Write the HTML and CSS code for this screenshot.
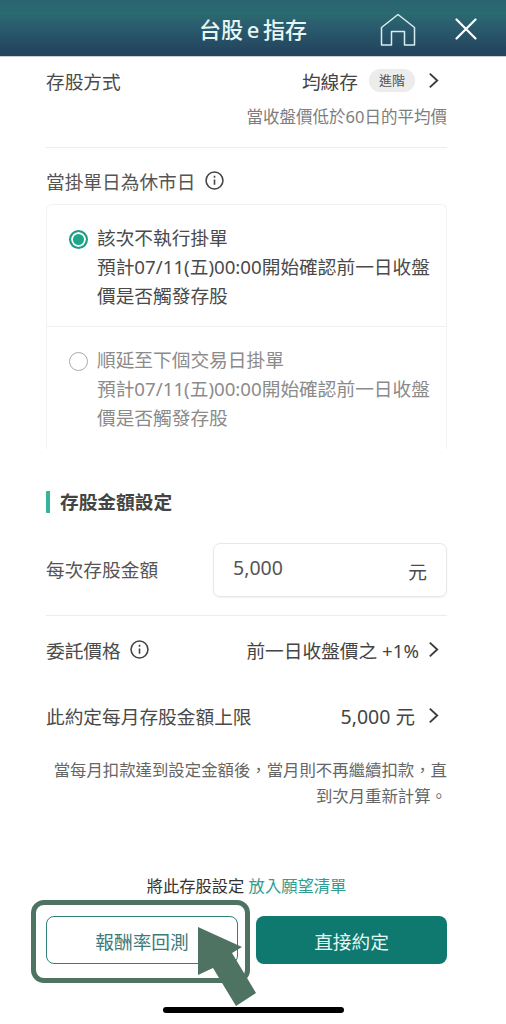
FILE: index.html
```html
<!DOCTYPE html>
<html lang="zh-Hant">
<head>
<meta charset="utf-8">
<title>台股e指存</title>
<link rel="stylesheet" href="styles.css">
</head>
<body>
<div class="page">
  <header class="topbar">
    <h1 class="title">台股 e 指存</h1>
    <svg class="home" viewBox="0 0 36 34" width="36" height="34"><path d="M1.500 32V14.500L18 1.500l16.500 13V32H24.500V18.500h-13V32z" fill="none" stroke="#d5efee" stroke-width="1.500" stroke-linejoin="round"/></svg>
    <svg class="close" viewBox="0 0 22 22" width="22" height="22"><path d="M1.500 1.500l19 19M20.500 1.500l-19 19" stroke="#fff" stroke-width="2.200" stroke-linecap="round"/></svg>
  </header>
  <main class="content">
    <div class="row method">
      <span>存股方式</span>
      <span class="value">均線存<span class="tag">進階</span><svg class="chev" viewBox="0 0 10 16"><path d="M1.500 1.500L8.500 8l-7 6.500"/></svg></span>
    </div>
    <p class="hint">當收盤價低於60日的平均價</p>
    <hr class="rule rule-a">
    <div class="label-line">當掛單日為休市日<svg class="info" viewBox="0 0 18 18"><circle cx="9" cy="9" r="8"/><path d="M9 8v5M9 4.600v1.800"/></svg></div>
    <div class="card">
      <div class="option">
        <span class="radio on"></span>
        <div class="option-text">該次不執行掛單<br>預計07/11(五)00:00開始確認前一日收盤<br>價是否觸發存股</div>
      </div>
      <div class="option off">
        <span class="radio"></span>
        <div class="option-text">順延至下個交易日掛單<br>預計07/11(五)00:00開始確認前一日收盤<br>價是否觸發存股</div>
      </div>
    </div>
    <h2 class="section">存股金額設定</h2>
    <div class="row amount">
      <span class="amount-label">每次存股金額</span>
      <div class="input"><span class="num">5,000</span><span>元</span></div>
    </div>
    <hr class="rule rule-b">
    <div class="row price">
      <span class="with-icon">委託價格<svg class="info" viewBox="0 0 18 18"><circle cx="9" cy="9" r="8"/><path d="M9 8v5M9 4.600v1.800"/></svg></span>
      <span class="value">前一日收盤價之 +1%<svg class="chev" viewBox="0 0 10 16"><path d="M1.500 1.500L8.500 8l-7 6.500"/></svg></span>
    </div>
    <div class="row limit">
      <span>此約定每月存股金額上限</span>
      <span class="value limit-value">5,000 元<svg class="chev" viewBox="0 0 10 16"><path d="M1.500 1.500L8.500 8l-7 6.500"/></svg></span>
    </div>
    <p class="note">當每月扣款達到設定金額後，當月則不再繼續扣款，直到次月重新計算。</p>
    <p class="wish">將此存股設定 <a class="link">放入願望清單</a></p>
    <div class="actions">
      <button class="btn ghost">報酬率回測</button>
      <button class="btn solid">直接約定</button>
    </div>
  </main>
  <div class="callout"></div>
  <svg class="arrow" viewBox="0 0 60 82" width="60" height="82"><path d="M0 1L44 21 34 27 58 67 38 80 15 42 0 49z" fill="#4e7362"/></svg>
  <div class="indicator"></div>
</div>
</body>
</html>
```
FILE: styles.css
```css
* { box-sizing: border-box; }
html, body { margin: 0; padding: 0; background: #fff; }
body { font-family: "Noto Sans", "Noto Sans CJK TC", sans-serif; color: #4a4a4a; }
.page { position: relative; width: 506px; height: 1024px; overflow: hidden; background: #fff; }

.topbar { position: relative; height: 57px; background: linear-gradient(#2b6473 0, #2a6a70 14px, #2a5c6e 26px, #24465f 50px, #24445d 56px); border-bottom: 1px solid #c9d0d4; }
.title { margin: 0; position: absolute; left: 199px; top: 14px; font-size: 22px; line-height: 30px; font-weight: 500; color: #e6f6f4; white-space: nowrap; word-spacing: -2px; }
.home { position: absolute; left: 380px; top: 13px; }
.close { position: absolute; left: 455px; top: 18px; }

.content { padding: 0 59px 0 46px; }
.row { display: flex; justify-content: space-between; align-items: center; font-size: 18.700px; white-space: nowrap; }
.value { display: flex; align-items: center; color: #444; }
.chev { width: 11px; height: 17px; margin-left: 9px; fill: none; stroke: #3c3c3c; stroke-width: 1.800; }
.method { height: 29px; margin: 9px 8px 0 0; }
.tag { margin: 0 13px 0 11px; width: 46px; text-align: center; height: 23px; line-height: 23px; font-size: 13px; border-radius: 12px; background: #ececec; color: #555; }
.method .chev { margin-left: 0; }
.hint { margin: 11px 0 0; font-size: 16.500px; line-height: 22px; text-align: right; color: #7d7d7d; white-space: nowrap; }
.rule { margin: 0; border: 0; height: 1px; background: #ececec; }
.rule-a { margin-top: 19px; }
.label-line { display: flex; align-items: center; margin-top: 19px; height: 26px; font-size: 18.700px; color: #555; }
.info { width: 19px; height: 19px; margin-left: 9px; fill: none; stroke: #444; stroke-width: 1.500; }
.card { margin: 11px 0 0; height: 245px; border: 1px solid #f2f2f2; border-bottom: 0; border-radius: 6px 6px 0 0; }
.option { display: flex; height: 121px; padding: 18px 0 0 22px; }
.option + .option { border-top: 1px solid #f0f0f0; padding-top: 18px; }
.option-text { font-size: 18.700px; line-height: 29px; color: #4a4a4a; white-space: nowrap; margin-left: 9px; }
.off .option-text { color: #8b8b8b; }
.radio { flex: none; width: 19px; height: 19px; margin-top: 7px; border-radius: 50%; border: 1.500px solid #a9a9a9; background: #fff; }
.radio.on { border: 2px solid #1c9e86; background: #1fa587; box-shadow: inset 0 0 0 2px #fff; }
.section { margin: 42px 0 0; height: 22px; padding-left: 10px; border-left: 4px solid #35b39c; font-size: 18.700px; line-height: 22px; font-weight: 700; color: #444; border-radius: 1px; }
.amount { margin: 30px 0 0; height: 54px; }
.amount-label { margin-bottom: 4px; color: #555; }
.input { display: flex; justify-content: space-between; align-items: center; width: 234px; height: 54px; padding: 0 19px; border: 1px solid #e8e8e8; border-radius: 7px; box-shadow: 0 1px 2px rgba(0,0,0,.06); }
.num { font-size: 19.500px; color: #555; margin-bottom: 5px; }
.rule-b { margin-top: 18px; }
.with-icon { display: flex; align-items: center; }
.price { margin: 18px 8px 0 0; height: 30px; }
.limit { margin: 36px 8px 0 0; height: 30px; }
.limit-value { font-size: 19.500px; }
.limit-value .chev { margin-left: 13px; }
.note { margin: 27px 0 0; font-size: 16.400px; line-height: 26px; text-align: right; color: #666; }
.wish { margin: 65px 0 0; font-size: 16.300px; line-height: 24px; text-align: center; color: #333; }
.link { color: #2f9d91; }
.actions { display: flex; justify-content: space-between; margin: 18px 0 0; }
.btn { width: 192px; height: 48px; font: inherit; font-size: 18.700px; border-radius: 8px; padding: 0; }
.ghost { background: #fff; border: 1px solid #2f8077; color: #3d7a78; }
.solid { width: 191px; background: #0f7970; border: 0; color: #e8f6f3; }

.callout { position: absolute; left: 31px; top: 900px; width: 219px; height: 83px; border: 5px solid #4e7362; border-radius: 13px; }
.arrow { position: absolute; left: 198px; top: 926px; }
.indicator { position: absolute; left: 163px; top: 1007px; width: 181px; height: 6px; border-radius: 3px; background: #000; }
```
